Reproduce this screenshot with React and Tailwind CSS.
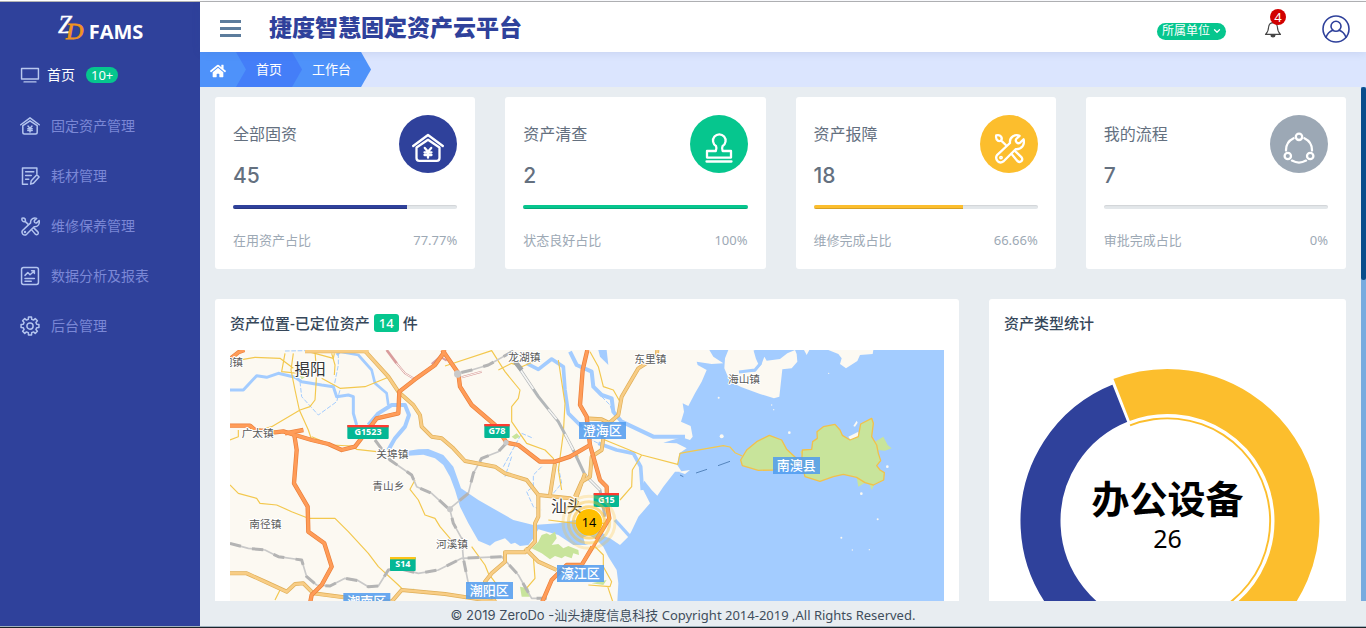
import React from "react";
import { FaHome } from "react-icons/fa";
import { ChevronDown } from "lucide-react";

/* ---------- icons ---------- */

function Icon({ children, className = "size-8", stroke = 2.3, box = "0 0 32 32" }) {
  return (
    <svg
      viewBox={box}
      className={className}
      fill="none"
      stroke="currentColor"
      strokeWidth={stroke}
      strokeLinecap="round"
      strokeLinejoin="round"
      aria-hidden="true"
    >
      {children}
    </svg>
  );
}

const HouseIcon = (props) => (
  <Icon {...props}>
    <path d="M1.2 14 16 3l14.800 11" />
    <path d="M4.500 15.500V26q0 2.800 2.800 2.800h17.400q2.800 0 2.800-2.800V15.500L16 7.800Z" />
    <path d="m12.800 16 3.200 3.800 3.200-3.800M16 19.800v5.900M12.500 20.300h7M12.500 23h7" />
  </Icon>
);

const StampIcon = (props) => (
  <Icon {...props}>
    <path d="M13 14a6.300 6.300 0 1 1 6.600 0q-1 2 0 5H28v6.600H4V19h8.800q1.200-3 .2-5Z" />
    <path d="M3.500 29.500h25" />
  </Icon>
);

const ToolsIcon = (props) => (
  <Icon {...props}>
    <path d="M3.200 3.400q3.200-1 5 1.400 1.400 2.400-.6 4-2.400 1-4-1.400-1-2-.4-4ZM8.200 8.600l4.600 4.400" />
    <path d="M4 23.200 17 11q-.6-4.600 3-6.800 3.400-1.800 6.600-.4L23.200 7q-1 1.600.4 3.400 1.600 1.400 3.400.4l3.600-3.600q1 4-1 7-2.800 3.400-7 3L10.600 29.300q-3.400 2.400-6-.2-2.600-3-.6-5.900Z" />
    <circle cx="8" cy="25.600" r="0.800" />
    <path d="m18.400 21.800 6 7.200q2.200 1.800 4 .2 1.600-1.800.2-3.800L22 19" />
  </Icon>
);

const FlowIcon = (props) => (
  <Icon {...props}>
    <circle cx="16" cy="4.800" r="3.200" />
    <circle cx="4.800" cy="24" r="3.200" />
    <circle cx="27.200" cy="24" r="3.200" />
    <path d="M10.600 6.200A13.400 13.400 0 0 0 3 18.500M21.400 6.200A13.400 13.400 0 0 1 29 18.500M9 28.600q7 4 14 0" />
  </Icon>
);

const ScreenIcon = (props) => (
  <Icon {...props}>
    <path d="M2.500 5.500h27v17h-27zM6.500 27h19" />
  </Icon>
);

const NoteIcon = (props) => (
  <Icon {...props}>
    <path d="M12 29H4V3h23v9M9 9h13M9 15h9M9 21h5" />
    <path d="m17 29 1-5.500L27 14l3.500 3.500-9 10Z" />
  </Icon>
);

const ReportIcon = (props) => (
  <Icon {...props}>
    <rect x="2.500" y="2.500" width="27" height="27" rx="3" />
    <path d="m8 15 4.500-4.500L16 14l7-6M18.500 7.500H23V12M8 20h15M8 24.500h10" />
  </Icon>
);

const gearPath = (() => {
  const pts = [];
  for (let i = 0; i < 8; i++) {
    const base = (i * Math.PI) / 4;
    [
      [-0.25, 11],
      [-0.17, 14.500],
      [0.17, 14.500],
      [0.25, 11],
    ].forEach(([a, r]) =>
      pts.push(`${(16 + r * Math.sin(base + a)).toFixed(2)} ${(16 - r * Math.cos(base + a)).toFixed(2)}`)
    );
  }
  return `M${pts.join("L")}Z`;
})();

const GearIcon = (props) => (
  <Icon {...props}>
    <path d={gearPath} />
    <circle cx="16" cy="16" r="5" />
  </Icon>
);

const BellIcon = () => (
  <Icon className="size-[18px]" box="0 0 18 18" stroke={1.1}>
    <path d="M9 1v1.500M9 2.600q-4 .2-4.400 4.400-.1 4.600-3.100 7.400h15q-3-2.800-3.100-7.400Q13 2.800 9 2.600Z" />
    <path d="M7 15.500q.2 1.500 2 1.500t2-1.500Z" fill="currentColor" />
  </Icon>
);

const UserIcon = () => (
  <Icon className="size-7" box="0 0 28 28" stroke={1.6}>
    <circle cx="14" cy="14" r="13" />
    <circle cx="14" cy="11.300" r="5" />
    <path d="M4 22.300q2-5.500 7-7M24 22.300q-2-5.500-7-7" />
  </Icon>
);

/* ---------- sidebar ---------- */

const MENU = [
  { label: "固定资产管理", icon: HouseIcon },
  { label: "耗材管理", icon: NoteIcon },
  { label: "维修保养管理", icon: ToolsIcon },
  { label: "数据分析及报表", icon: ReportIcon },
  { label: "后台管理", icon: GearIcon },
];

function Sidebar() {
  return (
    <aside className="flex w-[200px] shrink-0 flex-col bg-[#2f419b]">
      <a href="#" className="flex h-[50px] items-center justify-center gap-1 text-white">
        <svg viewBox="0 0 28 34" className="h-[34px] w-7" role="img" aria-label="ZD">
          <text x="1" y="23" className="fill-white font-['Liberation_Serif',serif] text-[25px] italic" stroke="#fff" strokeWidth="0.4">Z</text>
          <text x="9" y="29" className="fill-[#f0941f] font-['Liberation_Serif',serif] text-[24px] italic" stroke="#f0941f" strokeWidth="0.8">D</text>
        </svg>
        <span className="pt-2.5 font-['Open_Sans',sans-serif] text-xl leading-6 font-bold">FAMS</span>
      </a>
      <nav className="flex flex-col text-sm">
        <a href="#" className="flex h-[46px] items-center pl-5 text-white">
          <ScreenIcon className="size-5 text-[#b9c8ee]" />
          <span className="ml-[7px]">首页</span>
          <span className="ml-[11px] rounded-full bg-[#06c68e] px-[5px] text-[13px] leading-4">10+</span>
        </a>
        <ul>
          {MENU.map(({ label, icon: ItemIcon }) => (
            <li key={label}>
              <a href="#" className="flex h-[50px] items-center gap-[11px] pt-1.5 pl-5 text-[#7b88d6]">
                <ItemIcon className="size-5 text-[#b3c4ef]" stroke={2.4} />
                {label}
              </a>
            </li>
          ))}
        </ul>
      </nav>
    </aside>
  );
}

/* ---------- header ---------- */

function Header() {
  return (
    <header className="z-10 flex h-[50px] shrink-0 items-center bg-white pr-4 pl-5 shadow-[0_1px_8px_rgba(60,80,150,0.12)]">
      <button type="button" aria-label="菜单" className="flex w-[21px] flex-col gap-1 pt-0.5">
        <span className="h-[3px] bg-[#5c7c9c]" />
        <span className="h-[3px] bg-[#5c7c9c]" />
        <span className="h-[3px] bg-[#5c7c9c]" />
      </button>
      <h1 className="ml-7 flex-1 text-[23px] leading-9 font-black text-[#2f419b]">捷度智慧固定资产云平台</h1>
      <button type="button" className="mt-2 flex h-[17px] items-center gap-0.5 rounded-full bg-[#06c68e] pr-1 pl-[5px] text-xs leading-none text-white">
        所属单位
        <ChevronDown className="size-2.5" strokeWidth={3} />
      </button>
      <button type="button" aria-label="通知" className="relative mt-1 ml-[38px] text-[#444]">
        <BellIcon />
        <span className="absolute -top-[11px] left-1.5 size-4 rounded-full bg-[#d10000] text-[13px] leading-4 text-white">4</span>
      </button>
      <button type="button" aria-label="用户" className="mt-1 ml-10 text-[#2f419b]">
        <UserIcon />
      </button>
    </header>
  );
}

function Breadcrumb() {
  return (
    <nav aria-label="导航" className="flex h-[35px] shrink-0 bg-[#dbe5fe] text-[13px] text-white">
      <a href="#" aria-label="主页" className="z-[3] flex w-[46px] items-center bg-[#4e92fa] pt-0.5 pl-2.5 [clip-path:polygon(0_0,calc(100%-10px)_0,100%_50%,calc(100%-10px)_100%,0_100%)]">
        <FaHome className="size-4" />
      </a>
      <a href="#" className="z-[2] -ml-2.5 flex items-center bg-[#447ef8] px-5 [clip-path:polygon(0_0,calc(100%-10px)_0,100%_50%,calc(100%-10px)_100%,0_100%)]">
        首页
      </a>
      <a href="#" className="z-[1] -ml-2.5 flex items-center bg-[#4e92fa] px-5 [clip-path:polygon(0_0,calc(100%-10px)_0,100%_50%,calc(100%-10px)_100%,0_100%)]">
        工作台
      </a>
    </nav>
  );
}

/* ---------- stat cards ---------- */

const STATS = [
  { title: "全部固资", value: 45, note: "在用资产占比", percent: "77.77%", color: "bg-[#2f419b]", icon: HouseIcon },
  { title: "资产清查", value: 2, note: "状态良好占比", percent: "100%", color: "bg-[#06c68e]", icon: StampIcon },
  { title: "资产报障", value: 18, note: "维修完成占比", percent: "66.66%", color: "bg-[#fcbe2d]", icon: ToolsIcon },
  { title: "我的流程", value: 7, note: "审批完成占比", percent: "0%", color: "bg-[#9ca8b5]", icon: FlowIcon },
];

function StatCard({ title, value, note, percent, color, icon: StatIcon }) {
  return (
    <section className="rounded-[3px] bg-white p-[18px]">
      <div className="flex h-[90px] justify-between">
        <div className="text-[#64707f]">
          <h2 className="pt-[7px] text-base leading-6">{title}</h2>
          <p className="pt-[18px] font-['Inter',sans-serif] text-[21px] leading-6 font-medium">{value}</p>
        </div>
        <span className={`flex size-[58px] items-center justify-center rounded-full pt-2 text-white ${color}`}>
          <StatIcon className="size-8" />
        </span>
      </div>
      <div className="h-1 overflow-hidden rounded-sm bg-[#e3e7ea] shadow-[inset_0_1px_1px_rgba(0,0,0,0.08)]">
        <div className={`h-full shadow-[inset_0_-1px_0_rgba(0,0,0,0.15)] ${color}`} style={{ width: percent }} />
      </div>
      <div className="mt-5 flex justify-between text-[13px] leading-[22px] text-[#9da9b5]">
        <span>{note}</span>
        <span>{percent}</span>
      </div>
    </section>
  );
}

/* ---------- map ---------- */

const EAST = 1095;

const HIGHWAYS = [
  "M75 407H135L150 420 210 427 235 424 270 435 320 450 370 462 410 480 450 470 500 405 515 385 580 370 583 305 630 268 690 225 715 190 718 180",
  "M712 180 760 250 765 290 800 345 870 405 905 458 940 465 1005 515 1050 515 1095 500 1155 465",
  "M240 430 295 420M268 435 275 480 267 580 308 650 310 725 358 760 380 830 350 885 320 915 315 940",
  "M1147 180 1133 240 1125 345 1145 380 1155 465 1185 570 1205 590 1207 650 1213 685 1180 740 1160 775 1130 825 1085 825 1040 870 1010 940",
  "M75 207 100 187 118 180",
];

const ARTERIALS = [
  "M480 183 550 260 580 305 625 345 645 375 650 410 680 440 710 445 745 475 780 513 870 530 900 550 965 570 1000 615 1095 625 1120 640",
  "M1000 615V680L990 700V755L960 787H900V815L860 850 840 875 870 935",
  "M75 850H125L180 875 245 905 270 882 295 880 325 910 440 925 480 922 560 935 590 900 720 912 870 935",
  "M1050 520 1035 615M1140 550 1115 620",
  "M1357 180 1355 200 1300 235 1250 320 1240 375 1200 410 1190 480 1160 500 1155 560 1130 575 1110 620",
  "M300 184H490",
  "M960 775 1000 815 1055 840M1140 385 1190 388 1215 400",
];

const STREETS = [
  "M75 215 150 202 225 205 265 235M240 190 230 245 300 252M265 190 258 240 270 300 283 360 310 420 320 450M330 185 335 250 330 330 315 350 285 360 200 410 150 425M380 190 390 225 388 255M350 265 405 295 480 290 550 262",
  "M310 185 385 205 388 190M75 450 100 440 100 420M320 440 380 465 440 468 455 478 515 485M75 585 100 610 155 625 165 640 215 645 260 665 310 685 390 685 430 725 490 790 520 830 580 885 600 905",
  "M630 570 615 598 640 630 660 675 690 685 705 710 735 745 735 760M800 770 840 825 850 850 880 890M210 930 225 900 245 905",
  "M720 228 860 182 900 245 945 300 940 325 920 350 920 395 965 460 1020 480 1045 505 1050 520M880 240 920 220 950 230 985 215M1060 210 1080 340 1075 430 1120 500",
  "M1155 185 1180 230 1195 290 1225 300 1245 335M1200 450 1310 495 1418 523 1425 490 1440 487 1555 467 1575 471 1590 488 1612 498M1310 495 1282 540 1280 590 1245 630",
  "M985 800 990 865 960 900M1030 690 1110 700 1200 700M1170 770 1195 795 1195 830 1220 875 1215 890 1150 885M1208 890 1225 940M1075 430 1060 540 1070 600",
];

const RAILS = [
  "M75 760 130 775 180 780 220 800 290 810 305 860 335 885 375 888 420 865 460 872 490 890 520 888 550 840 580 835 640 850 700 840 770 805 890 800 940 855 980 925H1025",
  "M510 450 555 510 620 555 635 590 680 610 735 660 745 700 770 745 775 805 790 880",
  "M905 458 880 485 830 505 805 550 790 610 735 655",
  "M925 183 850 225 800 240 760 250",
];

const RIVERS = [
  { d: "M75 300H115L155 257 185 262 220 250 270 262 290 275 350 285 385 290 395 320 430 315 445 320V370L455 405", w: 9 },
  { d: "M395 195 405 185 460 195 500 240 510 280 545 310 550 345", w: 8 },
  { d: "M490 405 520 370 560 345 600 345 612 375 600 410 570 445 550 480", w: 12 },
  { d: "M285 275 290 320 340 375 395 335 405 300M400 190V225L388 285M240 183 300 182", w: 3 },
  { d: "M965 220 1000 238 1040 207 1075 230 1080 300 1090 370 1130 410", w: 11 },
  { d: "M1095 185 1115 225 1160 245 1165 290 1190 315 1220 325 1225 365 1250 395 1345 440 1440 440", w: 12 },
  { d: "M1180 460 1235 480 1285 490 1307 530 1312 600", w: 11 },
  { d: "M1230 690 1275 740", w: 10 },
  { d: "M1010 530 985 555 985 590 965 605 985 650 1010 660M1060 530 1070 580 1045 610M920 500 900 560", w: 3 },
  { d: "M895 530 950 430 985 445M1190 320 1215 345 1220 360M1130 410 1160 450 1200 470", w: 3 },
];

const TOWNS = [
  { x: 50, y: 227, name: "炮镇" },
  { x: 110, y: 441, name: "广太镇" },
  { x: 514, y: 504, name: "关埠镇" },
  { x: 502, y: 600, name: "青山乡" },
  { x: 133, y: 715, name: "南径镇" },
  { x: 693, y: 775, name: "河溪镇" },
  { x: 910, y: 214, name: "龙湖镇" },
  { x: EAST + 193, y: 220, name: "东里镇" },
  { x: EAST + 474, y: 280, name: "海山镇" },
];

const CITIES = [
  { x: 268, y: 256, name: "揭阳" },
  { x: 1038, y: 667, name: "汕头" },
];

const DISTRICTS = [
  { x: 1122, y: 396, name: "澄海区" },
  { x: 1704, y: 501, name: "南澳县" },
  { x: 1056, y: 825, name: "濠江区" },
  { x: 783, y: 876, name: "潮阳区" },
  { x: 415, y: 909, name: "潮南区" },
];

const SHIELDS = [
  { x: 427, y: 405, w: 124, name: "G1523", top: "#ff3b30" },
  { x: 838, y: 402, w: 76, name: "G78", top: "#ff3b30" },
  { x: 1166, y: 609, w: 76, name: "G15", top: "#ff3b30" },
  { x: 555, y: 801, w: 77, name: "S14", top: "#fcc419" },
];

function Roads({ paths, edge, fill, width }) {
  return (
    <g strokeLinejoin="round">
      {paths.map((d) => (
        <path key={d} d={d} stroke={edge} strokeWidth={width} />
      ))}
      {paths.map((d) => (
        <path key={d + "f"} d={d} stroke={fill} strokeWidth={width - 4} />
      ))}
    </g>
  );
}

function AssetMap() {
  return (
    <svg viewBox="75 180 2142 1200" preserveAspectRatio="xMinYMin slice" className="h-[400px] w-full" fill="none" role="img" aria-label="资产位置地图">
      <rect x="75" y="180" width="2142" height="1200" fill="#fcf9f2" />

      <g fill="#a3ccff">
        <path d="M1513 180 1525 200 1555 220 1520 222 1475 215 1478 225 1505 240 1490 275 1470 310 1450 348 1433 340 1437 365 1428 395 1457 408 1463 440 1455 450 1430 442 1375 458 1415 460 1445 475 1423 490 1417 525 1430 545 1410 545 1375 590 1357 617 1340 600 1318 572 1310 590 1335 640 1300 680 1278 727 1270 740 1245 765 1215 745 1195 738 1175 750 1195 770 1210 800 1235 840 1240 880 1237 935V1380H2217V180Z" />
        <path d="M600 484 640 478 670 477 715 495 745 530 768 595 820 630 925 690 985 705 1060 700 1110 690 1160 700 1200 735 1150 765 1105 765 1060 735 1000 718 985 745 970 765 945 768 930 758 918 762 900 745 870 755 855 767 820 752 790 700 765 650 750 600 735 560 715 525 690 505 655 494 600 498Z" />
        <path d="M1180 180H1205L1210 225 1185 200Z" />
      </g>
      <g stroke="#a3ccff" strokeLinejoin="round">
        {RIVERS.map(({ d, w }) => (
          <path key={d} d={d} strokeWidth={w} strokeDasharray={w === 3 ? "14 5" : undefined} />
        ))}
      </g>

      <g fill="#fcf9f2">
        <path d="M1570 180H1650L1655 205 1662 225 1650 240 1605 247 1650 245 1670 222 1678 200 1685 212 1725 207 1747 190 1770 180 1775 192 1777 215 1760 235 1732 238 1723 320 1707 325 1665 312 1610 292 1575 275 1558 235 1560 205Z" />
        <path d="M1870 180H2005L2003 192 1965 195 1957 213 1923 235 1905 222 1910 205 1900 192ZM1797 180H1813L1805 195Z" />
        <path d="M1930 440 1960 425 1962 440 1940 455ZM1945 408 1955 392 1958 398 1950 410Z" />
        <circle cx="1550" cy="439" r="6" />
        <circle cx="1753" cy="428" r="4" />
        <circle cx="2047" cy="530" r="4" />
        <circle cx="1969" cy="611" r="4" />
        <circle cx="1700" cy="345" r="2" />
        <circle cx="1706" cy="359" r="2" />
        <circle cx="1541" cy="323" r="3" />
        <circle cx="1871" cy="250" r="2" />
        <circle cx="2018" cy="688" r="3" />
        <circle cx="1909" cy="743" r="3" />
        <circle cx="1942" cy="780" r="2" />
        <circle cx="1993" cy="779" r="2" />
        <path d="M1420 545 1455 540 1440 552Z" />
      </g>
      <path d="M1650 180 1657 205 1665 222 1650 240 1602 246" stroke="#a3ccff" strokeWidth="9" />

      <g fill="#c8e49b">
        <path d="M2010 455 2035 440 2048 465 2060 475 2040 482 2018 480ZM1955 562 1960 590 1980 578ZM1993 582 2000 600 2008 584ZM1785 485 1800 478 1795 500Z" />
        <path d="M980 775 1000 755 1010 735 1025 730 1035 735 1050 725 1055 745 1040 765 1060 762 1075 775 1090 768 1120 780 1122 795 1105 790 1100 805 1080 798 1070 805 1050 798 1035 808 1010 790ZM1160 880 1205 870 1195 885Z" />
        <path d="M920 440 935 430 945 440 930 448ZM905 548 918 548 912 555ZM945 890 970 895 975 920 950 920ZM610 897 628 896 620 906ZM285 258 300 262 290 268Z" />
        <g stroke="#f2c14b" strokeWidth="4" strokeLinejoin="round">
          <path d="M1607 510 1625 480 1655 455 1693 436 1730 450 1745 478 1785 515 1755 530 1705 540 1660 541 1612 527Z" />
          <path d="M1792 480 1820 478 1823 455 1837 445 1836 425 1855 410 1890 403 1905 420 1912 436 1935 450 1960 440 1967 402 2000 385 2005 400 2000 440 2015 465 2020 490 2027 512 2015 527 2025 540 2038 548 2036 570 2005 585 1980 578 1955 562 1915 553 1885 560 1845 574 1800 560 1790 520Z" />
        </g>
      </g>

      <g stroke="#f3c84e" strokeWidth="3.500" strokeLinejoin="round">
        {STREETS.map((d) => (
          <path key={d} d={d} />
        ))}
      </g>
      <path d="M1473 549 1506 538M1539 527 1575 514M1425 555 1435 560" stroke="#5585bd" strokeWidth="3" />

      <g stroke="#d99c9c">
        <path d="M545 180 575 220" strokeWidth="8" />
        <path d="M575 220 600 250 630 268M680 222 705 200 725 212M770 262 830 245" strokeWidth="6" />
        <path d="M575 220 600 250 630 268M770 262 830 245" stroke="#fcf9f2" strokeWidth="3" />
      </g>
      <g strokeLinejoin="round">
        {RAILS.map((d) => (
          <path key={d} d={d} stroke="#c9c9c9" strokeWidth="5" />
        ))}
        {RAILS.map((d) => (
          <path key={d + "d"} d={d} stroke="#b4b4b4" strokeWidth="9" strokeDasharray="34 34" />
        ))}
        <path d="M930 215 1000 320 1060 395 1100 470 1140 555 1185 600 1200 680" stroke="#b3b7b9" strokeWidth="9" />
        <path d="M945 238 985 297M1030 358 1055 388M1080 432 1105 480M1140 555 1185 600" stroke="#f6f6f4" strokeWidth="5" />
        <path d="M930 215 950 240" stroke="#a0a5a8" strokeWidth="14" />
      </g>

      <Roads paths={ARTERIALS} edge="#dfae57" fill="#f8cd85" width={12} />
      <Roads paths={HIGHWAYS} edge="#ea7f3a" fill="#ff9c58" width={13} />
      <circle cx="758" cy="252" r="11" fill="#c9c9c9" />
      <circle cx="735" cy="658" r="9" fill="#c9c9c9" />
      <circle cx="903" cy="458" r="8" fill="#c9c9c9" />
      <path d="M1135 742 1152 735 1172 748 1160 768 1140 762Z" fill="#fcf9f2" />

      <g className="fill-[#5a5a5a] stroke-white [paint-order:stroke]" strokeWidth="6" strokeLinejoin="round">
        {TOWNS.map(({ x, y, name }) => (
          <text key={name} x={x} y={y} className="text-[32px]">{name}</text>
        ))}
        {CITIES.map(({ x, y, name }) => (
          <text key={name} x={x} y={y} className="fill-[#333] text-[47px]">{name}</text>
        ))}
      </g>

      {DISTRICTS.map(({ x, y, name }) => (
        <g key={name}>
          <rect x={x} y={y} width="141" height="51" fill="#4f9bf0" fillOpacity="0.85" />
          <text x={x + 70} y={y + 40} textAnchor="middle" className="fill-white text-[39px] font-medium">{name}</text>
        </g>
      ))}

      {SHIELDS.map(({ x, y, w, name, top }) => (
        <g key={name}>
          <rect x={x} y={y} width={w} height="42" rx="3" fill="#04b795" />
          <rect x={x} y={y} width={w} height="7" fill={top} />
          <text x={x + w / 2} y={y + 30} textAnchor="middle" className="fill-white text-[27px] font-bold">{name}</text>
        </g>
      ))}

      <g>
        <g stroke="#fbc02d" strokeWidth="9">
          <circle cx="1152" cy="697" r="47" strokeOpacity="0.55" />
          <circle cx="1152" cy="697" r="62" strokeOpacity="0.4" />
          <circle cx="1152" cy="697" r="78" strokeOpacity="0.25" />
        </g>
        <circle cx="1152" cy="697" r="40" fill="#ffbf00" />
        <text x="1152" y="711" textAnchor="middle" className="fill-black text-[38px]">14</text>
      </g>
    </svg>
  );
}

/* ---------- donut ---------- */

const CX = 163.5;
const CY = 171;

function polar(r, deg) {
  const a = (deg * Math.PI) / 180;
  return `${(CX + r * Math.sin(a)).toFixed(2)} ${(CY - r * Math.cos(a)).toFixed(2)}`;
}

function ring(outer, inner, from, to) {
  const large = to - from > 180 ? 1 : 0;
  return `M${polar(outer, from)}A${outer} ${outer} 0 ${large} 1 ${polar(outer, to)}L${polar(inner, to)}A${inner} ${inner} 0 ${large} 0 ${polar(inner, from)}Z`;
}

function TypeDonut() {
  return (
    <svg viewBox="0 0 327 400" className="h-[400px] w-full" role="img" aria-label="资产类型统计">
      <path d={ring(148, 106, 196, 338.400)} fill="#2f419b" stroke="#fff" strokeWidth="2" />
      <path d={ring(153, 106, -21.200, 196)} fill="#fcbe2d" stroke="#fff" strokeWidth="2" />
      <path d={ring(103.600, 101.700, -21.400, 196)} fill="#fcbe2d" />
      <text x={CX} y="163" textAnchor="middle" className="fill-black text-[38px] font-bold">办公设备</text>
      <text x={CX} y="198" textAnchor="middle" className="fill-black text-[25px]">26</text>
    </svg>
  );
}

/* ---------- page ---------- */

function Dashboard() {
  return (
    <main className="grid flex-1 grid-cols-4 content-start gap-[30px] overflow-y-auto px-[15px] pt-2.5 [scrollbar-width:none]">
      {STATS.map((s) => (
        <StatCard key={s.title} {...s} />
      ))}
      <div className="col-span-4 grid grid-cols-3 gap-[30px]">
        <section className="col-span-2 rounded-[3px] bg-white p-[15px]">
          <h2 className="flex items-center text-[15px] leading-[18px] font-medium text-[#36475a]">
            资产位置-已定位资产
            <span className="mx-1 rounded-[3px] bg-[#06c68e] px-[5px] text-[13px] text-white">14</span>
            件
          </h2>
          <div className="mt-[18px]">
            <AssetMap />
          </div>
        </section>
        <section className="rounded-[3px] bg-white p-[15px]">
          <h2 className="text-[15px] leading-[18px] font-medium text-[#36475a]">资产类型统计</h2>
          <div className="mt-[18px]">
            <TypeDonut />
          </div>
        </section>
      </div>
    </main>
  );
}

export default function App() {
  return (
    <div className="flex h-screen flex-col border-t border-white border-b-[#1d2329] border-b bg-[#e8edf1] font-['Noto_Sans','Noto_Sans_CJK_SC',sans-serif]">
      <div className="flex min-h-0 flex-1 border-t border-[#b4b4b4] border-b border-b-[#9fb2bd]">
        <Sidebar />
        <div className="flex min-w-0 flex-1 flex-col">
          <Header />
          <Breadcrumb />
          <div className="flex min-h-0 flex-1">
            <Dashboard />
            <div className="w-[5px] shrink-0 bg-[#78abdf]">
              <div className="h-[193px] rounded-sm bg-[#094d8b]" />
            </div>
          </div>
          <footer className="shrink-0 pr-[200px] pt-1 text-center text-[13px] leading-[21px] text-[#3f4d5c]">
            <span className="font-['Inter','Noto_Sans_CJK_SC',sans-serif]">© 2019 ZeroDo -</span>
            汕头捷度信息科技 Copyright 2014-2019 ,All Rights Reserved.
          </footer>
        </div>
      </div>
    </div>
  );
}
